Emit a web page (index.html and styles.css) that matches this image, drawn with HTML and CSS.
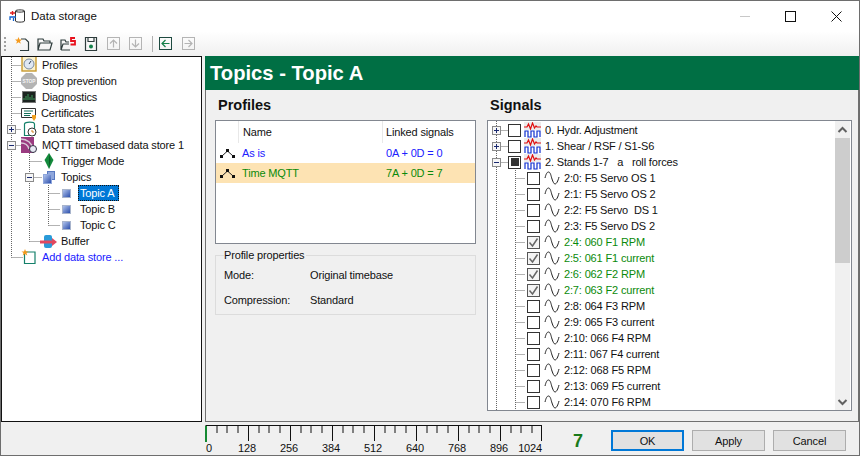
FILE: index.html
```html
<!DOCTYPE html>
<html lang="en">

<head>
  <meta charset="UTF-8">
  <meta name="viewport" content="width=device-width, initial-scale=1.0">
  <title>Data storage</title>

  <link rel="stylesheet" href="styles.css">
</head>

<body>
  <svg class="defs" width="0" height="0">
    <defs>
      <linearGradient id="cube-fill" x1="0" y1="0" x2="1" y2="1">
        <stop offset="0" stop-color="#b8caf0"/>
        <stop offset="1" stop-color="#2448a8"/>
      </linearGradient>
    </defs>
    <symbol id="wave" viewBox="0 0 16 14"><path d="M1 7C2 3 3 1 4.500 1C6.500 1 7 5 8 8C9 11 10 13 11 13C12.500 13 14 10 15 6" fill="none" stroke="#222" stroke-width="1"/></symbol>
    <symbol id="group" viewBox="0 0 17 16">
      <rect x="0" y="0" width="17" height="8" fill="#ececec"/>
      <path d="M0 5h3l1.500-3 2 5 2-6 2 5 1.500-2 1 1h4" fill="none" stroke="#e01010" stroke-width="1.200"/>
      <path d="M1 15V9h3v6h3V9h3v6h3V9h3v6" fill="none" stroke="#1030d0" stroke-width="1.200"/>
    </symbol>
    <symbol id="cube" viewBox="0 0 9 9"><rect x=".5" y=".5" width="8" height="8" fill="url(#cube-fill)" stroke="#a8b4cc"/></symbol>
    <symbol id="peak" viewBox="0 0 15 10"><path d="M2 8 7.500 3 13 8" fill="none" stroke="#222" stroke-width="1"/><rect x="0" y="7" width="3" height="3" fill="#111"/><rect x="6" y="1" width="3" height="3" fill="#111"/><rect x="12" y="7" width="3" height="3" fill="#111"/></symbol>
    <symbol id="tick" viewBox="0 0 11 11"><path d="M1.500 5.500 4.500 9 9.500 1.500" fill="none" stroke="#666" stroke-width="1.500"/></symbol>
  </svg>

  <div class="window">
    <header class="titlebar">
      <svg class="app-icon" width="16" height="14" viewBox="0 0 16 14">
        <path d="M6.500 2C6.500 .5 15.500 .5 15.500 2V12C15.500 13.500 6.500 13.500 6.500 12ZM6.500 2C6.500 3.500 15.500 3.500 15.500 2" fill="#fff" stroke="#333"/>
        <path d="M1 4h5M3.500 2v4" stroke="#e02020" stroke-width="1.400"/>
        <path d="M1 11V8h6M4.500 12V9" fill="none" stroke="#1060d0" stroke-width="1.300"/>
      </svg>
      <span class="title-text">Data storage</span>
      <div class="win-buttons">
        <span class="win-min"></span>
        <span class="win-max"></span>
        <svg width="11" height="11" viewBox="0 0 11 11"><path d="M.5.500l10 10M10.500.500l-10 10" stroke="#111" fill="none"/></svg>
      </div>
    </header>

    <div class="toolbar">
      <span class="grip"></span>
      <svg class="tool" width="16" height="16" viewBox="0 0 16 16"><path d="M7 3h4.500L14.500 6v8.500H6" fill="none" stroke="#2e3c3c" stroke-width="1.200"/><path d="M4.500 1l1 2.500H8L6 5.200l.8 2.600-2.300-1.500-2.300 1.500.8-2.600-2-1.700h2.500z" fill="#f59a1c"/></svg>
      <svg class="tool" width="16" height="16" viewBox="0 0 16 16"><path d="M1 14V3h5l1 2h6v2M1 14l2-7h12l-2 7z" fill="none" stroke="#2e3c3c" stroke-width="1.200"/></svg>
      <svg class="tool" width="16" height="16" viewBox="0 0 16 16"><path d="M1 14V4h4l1 2h3M1 14l2-6h6M1 14h9" fill="none" stroke="#2e3c3c" stroke-width="1.200"/><path d="M15 2h-4v3h4v3.500h-4.500" fill="none" stroke="#e8101c" stroke-width="1.800"/></svg>
      <svg class="tool tool-save" width="16" height="16" viewBox="0 0 16 16"><path d="M2.500 1.500h11v13h-11zM5 1.500v4h6v-4" fill="none" stroke="#2e3c3c" stroke-width="1.200"/><circle cx="8" cy="10.500" r="2" fill="#14804a"/></svg>
      <svg class="tool tool-off" width="13" height="13" viewBox="0 0 13 13"><rect x=".5" y=".5" width="12" height="12" fill="none" stroke="#b4b4b4"/><path d="M6.500 10.500V3M3 6.500 6.500 3 10 6.500" fill="none" stroke="#b4b4b4" stroke-width="1.200"/></svg>
      <svg class="tool tool-off" width="13" height="13" viewBox="0 0 13 13"><rect x=".5" y=".5" width="12" height="12" fill="none" stroke="#b4b4b4"/><path d="M6.500 2.500V10M3 6.500 6.500 10 10 6.500" fill="none" stroke="#b4b4b4" stroke-width="1.200"/></svg>
      <span class="tool-sep"></span>
      <svg class="tool tool-back" width="13" height="13" viewBox="0 0 13 13"><rect x=".5" y=".5" width="12" height="12" fill="none" stroke="#1e4a40"/><path d="M10.500 6.500H3M6.500 3 3 6.500 6.500 10" fill="none" stroke="#14804a" stroke-width="1.200"/></svg>
      <svg class="tool" width="13" height="13" viewBox="0 0 13 13"><rect x=".5" y=".5" width="12" height="12" fill="none" stroke="#b4b4b4"/><path d="M2.500 6.500H10M6.500 3 10 6.500 6.500 10" fill="none" stroke="#b4b4b4" stroke-width="1.200"/></svg>
    </div>

    <div class="main">
      <nav class="nav-tree">
        <svg class="tree-lines" width="198" height="210">
          <g stroke="#666" stroke-dasharray="1 1" fill="none">
            <path d="M9.500 0V200.500M9.500 8.500H19M9.500 24.500H19M9.500 40.500H19M9.500 56.500H19M9.500 72.500H19M9.500 88.500H19M9.500 200.500H21"/>
            <path d="M27.500 96V184.500M27.500 104.500H40M27.500 120.500H40M27.500 184.500H38"/>
            <path d="M46.500 128V168.500M46.500 136.500H58M46.500 152.500H58M46.500 168.500H58"/>
          </g>
          <g fill="#f6f6f6" stroke="#8a8a8a">
            <rect x="5.500" y="68.500" width="8" height="8"/>
            <rect x="5.500" y="84.500" width="8" height="8"/>
            <rect x="23.500" y="116.500" width="8" height="8"/>
          </g>
          <path d="M7 72.500h5M9.500 70v5M7 88.500h5M25 120.500h5" stroke="#1a2a70"/>
        </svg>
        <div class="nav-row">
          <svg class="nav-icon" width="16" height="16" viewBox="0 0 16 16"><rect x="1" y="-3" width="14" height="17" fill="#fbf2cf" stroke="#c89a30" stroke-width="1.400"/><circle cx="8" cy="7" r="5" fill="#dfe8f4" stroke="#7a8aa0"/><path d="M8 7l2-3" stroke="#345"/></svg>
          <span>Profiles</span>
        </div>
        <div class="nav-row">
          <svg class="nav-icon" width="16" height="16" viewBox="0 0 16 16"><path d="M5 0h6l5 5v6l-5 5H5l-5-5V5z" fill="#b4b4b4"/><text x="8" y="10" class="stop-text" text-anchor="middle">STOP</text></svg>
          <span>Stop prevention</span>
        </div>
        <div class="nav-row">
          <svg class="nav-icon" width="16" height="16" viewBox="0 0 16 16"><rect x="1.500" y="2.500" width="13" height="11" fill="#1c2420" stroke="#777"/><path d="M3 11V9M5 11V7M7 11V5M9 11V8M11 11V6M13 11V9" stroke="#3c9a58"/></svg>
          <span>Diagnostics</span>
        </div>
        <div class="nav-row nav-tight">
          <svg class="nav-icon" width="16" height="16" viewBox="0 0 16 16"><path d="M.5 3.500h14v9H.5z" fill="#fff" stroke="#333"/><path d="M3 6h9M3 8.500h7M3 10.500h6" stroke="#14705a"/><path d="M11 10h4v3l-2 3-2-3z" fill="#f0a020"/></svg>
          <span>Certificates</span>
        </div>
        <div class="nav-row">
          <svg class="nav-icon" width="16" height="16" viewBox="0 0 16 16"><path d="M3.500 3C3.500 .5 13.500 .5 13.500 3V14.500H3.500z" fill="#fff" stroke="#14806a" stroke-width="1.200"/><circle cx="11" cy="11" r="4" fill="#fff" stroke="#333"/><path d="M11 9v2h2" fill="none" stroke="#d08020"/></svg>
          <span>Data store 1</span>
        </div>
        <div class="nav-row">
          <svg class="nav-icon" width="16" height="16" viewBox="0 0 16 16"><path d="M0 0H13V16H0z" fill="#9a3a80"/><path d="M0 2C6 2 11 6 12 12M0 6C4 6 7 8 8 12" fill="none" stroke="#d8c8d8" stroke-width="1.500"/><circle cx="12" cy="12" r="3.500" fill="#e8e8f4" stroke="#334"/></svg>
          <span>MQTT timebased data store 1</span>
        </div>
        <div class="nav-row lvl-2">
          <svg class="nav-icon" width="12" height="16" viewBox="0 0 12 16"><path d="M6 0 10.500 7 6 16 1.500 7z" fill="#148a3c"/><path d="M6 0 7.500 7 6 16z" fill="#0b5c26"/></svg>
          <span>Trigger Mode</span>
        </div>
        <div class="nav-row lvl-2">
          <svg class="nav-icon" width="12" height="13" viewBox="0 0 12 13"><rect x="4.500" y=".5" width="7" height="8" fill="#8ea6dc" stroke="#5878c0"/><rect x=".5" y="3.500" width="8" height="9" fill="url(#cube-fill)" stroke="#8ea6dc"/></svg>
          <span>Topics</span>
        </div>
        <div class="nav-row lvl-3">
          <svg class="nav-icon" width="9" height="9"><use href="#cube"/></svg>
          <span class="selected">Topic A</span>
        </div>
        <div class="nav-row lvl-3">
          <svg class="nav-icon" width="9" height="9"><use href="#cube"/></svg>
          <span class="plain">Topic B</span>
        </div>
        <div class="nav-row lvl-3">
          <svg class="nav-icon" width="9" height="9"><use href="#cube"/></svg>
          <span class="plain">Topic C</span>
        </div>
        <div class="nav-row lvl-2 lvl-buffer">
          <svg class="nav-icon" width="17" height="13" viewBox="0 0 17 13"><rect x="4" y="0" width="8" height="13" rx="2" fill="#2a9ad8"/><path d="M0 7h12" stroke="#e04860" stroke-width="3"/><path d="M12 3 17 7 12 11z" fill="#e04860"/></svg>
          <span>Buffer</span>
        </div>
        <div class="nav-row">
          <svg class="nav-icon" width="16" height="16" viewBox="0 0 16 16"><path d="M3.500 3h10.500v11.500H3.500z" fill="#fff" stroke="#14806a" stroke-width="1.200"/><path d="M4 0l1 2.500h2.500L5.500 4l.8 2.500L4 5 1.700 6.500 2.500 4 .5 2.500H3z" fill="#f59a1c"/></svg>
          <span class="add-link">Add data store ...</span>
        </div>
      </nav>

      <section class="content">
        <h1 class="page-title">Topics - Topic A</h1>
        <div class="panels">
          <div class="col-profiles">
            <h2>Profiles</h2>
            <div class="profile-table">
              <div class="p-row p-head"><span class="p-ic"></span><span class="p-name">Name</span><span class="p-link">Linked signals</span></div>
              <div class="p-row blue"><span class="p-ic"><svg width="15" height="10"><use href="#peak"/></svg></span><span class="p-name">As is</span><span class="p-link">0A + 0D = 0</span></div>
              <div class="p-row green active"><span class="p-ic"><svg width="15" height="10"><use href="#peak"/></svg></span><span class="p-name">Time MQTT</span><span class="p-link">7A + 0D = 7</span></div>
            </div>
            <fieldset class="props">
              <legend>Profile properties</legend>
              <div class="prop-row"><span>Mode:</span><span>Original timebase</span></div>
              <div class="prop-row"><span>Compression:</span><span>Standard</span></div>
            </fieldset>
          </div>

          <div class="col-signals">
            <h2>Signals</h2>
            <div class="signal-box">
              <div class="signal-tree">
                <svg class="tree-lines" width="60" height="290">
                  <g stroke="#666" stroke-dasharray="1 1" fill="none">
                    <path d="M8.500 0V289M8.500 9.500H20M8.500 25.500H20M8.500 41.500H20"/>
                    <path d="M27.500 49V289M27.500 57.500H37M27.500 73.500H37M27.500 89.500H37M27.500 105.500H37M27.500 121.500H37M27.500 137.500H37M27.500 153.500H37M27.500 169.500H37M27.500 185.500H37M27.500 201.500H37M27.500 217.500H37M27.500 233.500H37M27.500 249.500H37M27.500 265.500H37M27.500 281.500H37"/>
                  </g>
                  <g fill="#f6f6f6" stroke="#8a8a8a">
                    <rect x="4.500" y="5.500" width="8" height="8"/>
                    <rect x="4.500" y="21.500" width="8" height="8"/>
                    <rect x="4.500" y="37.500" width="8" height="8"/>
                  </g>
                  <path d="M6 9.500h5M8.500 7v5M6 25.500h5M8.500 23v5M6 41.500h5" stroke="#1a2a70"/>
                </svg>
                <div class="s-row s-group"><span class="check"></span><svg class="s-icon" width="17" height="16"><use href="#group"/></svg><span>0. Hydr. Adjustment</span></div>
                <div class="s-row s-group"><span class="check"></span><svg class="s-icon" width="17" height="16"><use href="#group"/></svg><span>1. Shear / RSF / S1-S6</span></div>
                <div class="s-row s-group"><span class="check partial"></span><svg class="s-icon" width="17" height="16"><use href="#group"/></svg><span>2. Stands 1-7 &nbsp;&nbsp;a &nbsp;&nbsp;roll forces</span></div>
                <div class="s-row s-child"><span class="check"></span><svg class="s-icon" width="16" height="14"><use href="#wave"/></svg><span>2:0: F5 Servo OS 1</span></div>
                <div class="s-row s-child"><span class="check"></span><svg class="s-icon" width="16" height="14"><use href="#wave"/></svg><span>2:1: F5 Servo OS 2</span></div>
                <div class="s-row s-child"><span class="check"></span><svg class="s-icon" width="16" height="14"><use href="#wave"/></svg><span>2:2: F5 Servo &nbsp;DS 1</span></div>
                <div class="s-row s-child"><span class="check"></span><svg class="s-icon" width="16" height="14"><use href="#wave"/></svg><span>2:3: F5 Servo DS 2</span></div>
                <div class="s-row s-child green"><span class="check on"><svg width="11" height="11"><use href="#tick"/></svg></span><svg class="s-icon" width="16" height="14"><use href="#wave"/></svg><span>2:4: 060 F1 RPM</span></div>
                <div class="s-row s-child green"><span class="check on"><svg width="11" height="11"><use href="#tick"/></svg></span><svg class="s-icon" width="16" height="14"><use href="#wave"/></svg><span>2:5: 061 F1 current</span></div>
                <div class="s-row s-child green"><span class="check on"><svg width="11" height="11"><use href="#tick"/></svg></span><svg class="s-icon" width="16" height="14"><use href="#wave"/></svg><span>2:6: 062 F2 RPM</span></div>
                <div class="s-row s-child green"><span class="check on"><svg width="11" height="11"><use href="#tick"/></svg></span><svg class="s-icon" width="16" height="14"><use href="#wave"/></svg><span>2:7: 063 F2 current</span></div>
                <div class="s-row s-child"><span class="check"></span><svg class="s-icon" width="16" height="14"><use href="#wave"/></svg><span>2:8: 064 F3 RPM</span></div>
                <div class="s-row s-child"><span class="check"></span><svg class="s-icon" width="16" height="14"><use href="#wave"/></svg><span>2:9: 065 F3 current</span></div>
                <div class="s-row s-child"><span class="check"></span><svg class="s-icon" width="16" height="14"><use href="#wave"/></svg><span>2:10: 066 F4 RPM</span></div>
                <div class="s-row s-child"><span class="check"></span><svg class="s-icon" width="16" height="14"><use href="#wave"/></svg><span>2:11: 067 F4 current</span></div>
                <div class="s-row s-child"><span class="check"></span><svg class="s-icon" width="16" height="14"><use href="#wave"/></svg><span>2:12: 068 F5 RPM</span></div>
                <div class="s-row s-child"><span class="check"></span><svg class="s-icon" width="16" height="14"><use href="#wave"/></svg><span>2:13: 069 F5 current</span></div>
                <div class="s-row s-child"><span class="check"></span><svg class="s-icon" width="16" height="14"><use href="#wave"/></svg><span>2:14: 070 F6 RPM</span></div>
              </div>
              <div class="scrollbar">
                <svg width="15" height="17" viewBox="0 0 15 17"><path d="M3.500 11l4-4 4 4" fill="none" stroke="#606060" stroke-width="2"/></svg>
                <div class="track"><div class="thumb"></div></div>
                <svg width="15" height="16" viewBox="0 0 15 16"><path d="M3.500 6l4 4 4-4" fill="none" stroke="#606060" stroke-width="2"/></svg>
              </div>
            </div>
          </div>
        </div>
      </section>
    </div>

    <footer class="bottom">
      <div class="ruler">
        <svg class="ticks" width="342" height="17" viewBox="0 0 342 17">
          <path d="M.5 .5H336.500" stroke="#111"/>
          <path stroke="#111" d="M1.500 0v16M12 0v8M22 0v8M33 0v8M43.500 0v16M54 0v8M64 0v8M75 0v8M85.500 0v16M96 0v8M106 0v8M117 0v8M127.500 0v16M138 0v8M148 0v8M159 0v8M169.500 0v16M180 0v8M190 0v8M201 0v8M211.500 0v16M222 0v8M232 0v8M243 0v8M253.500 0v16M264 0v8M274 0v8M285 0v8M295.500 0v16M306 0v8M316 0v8M327 0v8M336.500 0v16"/>
          <rect x="0" y="1" width="2" height="16" fill="#158a32"/>
        </svg>
        <div class="ruler-labels">
          <span>0</span><span>128</span><span>256</span><span>384</span><span>512</span><span>640</span><span>768</span><span>896</span><span>1024</span>
        </div>
      </div>
      <span class="count">7</span>
      <div class="buttons">
        <button class="btn btn-default">OK</button>
        <button class="btn">Apply</button>
        <button class="btn">Cancel</button>
      </div>
    </footer>
  </div>
</body>

</html>
```
FILE: styles.css
```css
* {
  box-sizing: border-box;
}

html,
body {
  margin: 0;
  height: 100%;
}

body {
  font-family: "Liberation Sans", Arial, sans-serif;
  font-size: 11px;
  letter-spacing: -0.15px;
  color: #111;
  overflow: hidden;
}

.defs {
  position: absolute;
}

.window {
  width: 860px;
  height: 456px;
  display: flex;
  flex-direction: column;
  background-color: #f0f0f0;
  border: 1px solid #6e6e6e;
}

/* title bar */
.titlebar {
  height: 30px;
  display: flex;
  align-items: center;
  padding-left: 8px;
  background-color: #fff;
}

.app-icon {
  margin-right: 6px;
}

.title-text {
  font-size: 11.5px;
  letter-spacing: 0;
}

.win-buttons {
  margin-left: auto;
  display: flex;
  align-items: center;
  gap: 35px;
  padding-right: 17px;
}

.win-min {
  width: 10px;
  height: 1px;
  background-color: #c8c8c8;
}

.win-max {
  width: 11px;
  height: 11px;
  border: 1px solid #111;
}

/* toolbar */
.toolbar {
  height: 25px;
  display: flex;
  align-items: center;
  padding-left: 3px;
  background: linear-gradient(#fff, #f0f0f0);
}

.grip {
  width: 2px;
  height: 14px;
  margin-right: 8px;
  background: repeating-linear-gradient(#a0a0a0 0 2px, transparent 2px 4px);
}

.tool {
  margin-right: 7px;
}

.tool-save {
  margin-right: 8px;
}

.tool-off {
  margin-right: 9px;
}

.tool-back {
  margin-right: 10px;
}

.tool-sep {
  width: 1px;
  height: 16px;
  margin: 0 6px 0 1px;
  background-color: #b0b0b0;
}

/* main area */
.main {
  flex: 1;
  display: flex;
  gap: 3px;
  min-height: 0;
}

.nav-tree {
  position: relative;
  width: 201px;
  background-color: #fff;
  border: 1px solid #111;
}

.tree-lines {
  position: absolute;
  left: 0;
  top: 0;
}

.nav-row {
  position: relative;
  height: 16px;
  display: flex;
  align-items: center;
  padding-left: 19px;
}

.nav-icon {
  flex-shrink: 0;
  margin-right: 5px;
}

.nav-tight .nav-icon {
  margin-right: 4px;
}

.lvl-2 {
  padding-left: 41px;
}

.lvl-2 .nav-icon {
  margin-right: 6px;
}

.lvl-buffer {
  padding-left: 38px;
}

.lvl-buffer .nav-icon {
  margin-right: 4px;
}

.lvl-3 {
  padding-left: 60px;
}

.lvl-3 .nav-icon {
  margin-right: 7px;
}

.plain {
  padding-left: 2px;
}

.selected {
  height: 16px;
  padding: 0 5px 0 2px;
  line-height: 16px;
  color: #fff;
  background-color: #0078d7;
  outline: 1px dotted #111;
  outline-offset: -1px;
}

.add-link {
  color: #2020ff;
}

.stop-text {
  font-size: 4.8px;
  font-weight: bold;
  letter-spacing: 0;
  fill: #f4f4f4;
}

/* right side */
.content {
  flex: 1;
  display: flex;
  flex-direction: column;
  min-width: 0;
}

.page-title {
  height: 34px;
  margin: 0;
  padding: 0 0 0 5px;
  line-height: 34px;
  font-size: 20.2px;
  letter-spacing: 0;
  font-weight: bold;
  color: #fff;
  background-color: #006f44;
}

.panels {
  flex: 1;
  display: flex;
  padding: 0 6px 10px 9px;
  border: 1px solid #707070;
  border-top: 0;
}

.col-profiles {
  width: 261px;
  margin-right: 11px;
}

.col-signals {
  width: 365px;
}

h2 {
  height: 30px;
  margin: 0;
  padding-left: 3px;
  line-height: 30px;
  font-size: 14.5px;
  letter-spacing: 0;
  font-weight: bold;
}

.profile-table {
  height: 124px;
  background-color: #fff;
  border: 1px solid #828790;
}

.p-row {
  display: flex;
  align-items: center;
  height: 20px;
}

.p-head {
  height: 22px;
}

.p-ic {
  width: 23px;
  height: 100%;
  display: flex;
  align-items: center;
  padding-left: 4px;
}

.p-name {
  width: 144px;
  padding-left: 3px;
}

.p-head .p-ic {
  border-right: 1px solid #e8e8e8;
}

.p-head .p-name {
  height: 100%;
  padding-left: 4px;
  line-height: 22px;
  border-right: 1px solid #e8e8e8;
}

.p-link {
  padding-left: 3px;
}

.blue {
  color: #2020ff;
}

.green {
  color: #0a8a0a;
}

.active {
  background-color: #fde3b3;
}

.props {
  height: 66px;
  margin: 5px 0 0;
  padding: 8px 0 0 8px;
  border: 1px solid #dcdcdc;
}

.props legend {
  padding: 0 2px 0 0;
}

.prop-row {
  display: flex;
  height: 25px;
}

.prop-row span:first-child {
  width: 86px;
}

/* signals tree */
.signal-box {
  height: 291px;
  display: flex;
  background-color: #fff;
  border: 1px solid #828790;
}

.signal-tree {
  position: relative;
  flex: 1;
  padding-top: 1px;
  overflow: hidden;
}

.s-row {
  position: relative;
  height: 16px;
  display: flex;
  align-items: center;
}

.s-group {
  padding-left: 20px;
}

.s-child {
  padding-left: 39px;
}

.check {
  width: 13px;
  height: 13px;
  display: flex;
  align-items: center;
  justify-content: center;
  background-color: #fff;
  border: 1px solid #333;
  margin-right: 3px;
}

.check.on {
  border-color: #555;
  background-color: #f4f4f4;
}

.partial::after {
  content: "";
  width: 8px;
  height: 8px;
  background-color: #333;
}

.s-group .s-icon {
  margin-right: 4px;
}

.s-child .s-icon {
  margin: 0 4px 0 1px;
}

.scrollbar {
  width: 15px;
  margin-right: 1px;
  display: flex;
  flex-direction: column;
  background-color: #f0f0f0;
}

.track {
  flex: 1;
}

.thumb {
  height: 125px;
  background-color: #cdcdcd;
}

/* bottom strip */
.bottom {
  height: 33px;
  display: flex;
  padding-left: 204px;
}

.ruler {
  width: 345px;
  padding-top: 3px;
}

.ticks {
  display: block;
}

.ruler-labels {
  display: flex;
  padding-left: 1px;
  line-height: 13px;
}

.ruler-labels span {
  width: 42px;
  text-align: center;
}

.ruler-labels span:first-child {
  width: 20px;
  text-align: left;
}

.ruler-labels span:last-child {
  width: 24px;
  margin-left: -2px;
  text-align: right;
}

.count {
  width: 61px;
  padding: 9px 0 0 23px;
  font-size: 18px;
  letter-spacing: 0;
  font-weight: bold;
  color: #1a7a1a;
}

.buttons {
  display: flex;
  gap: 8px;
  padding-top: 8px;
}

.btn {
  width: 73px;
  height: 21px;
  padding: 0;
  font-family: inherit;
  font-size: 11px;
  letter-spacing: -0.15px;
  color: #111;
  background-color: #e1e1e1;
  border: 1px solid #adadad;
}

.btn-default {
  border: 2px solid #0078d7;
}
```
